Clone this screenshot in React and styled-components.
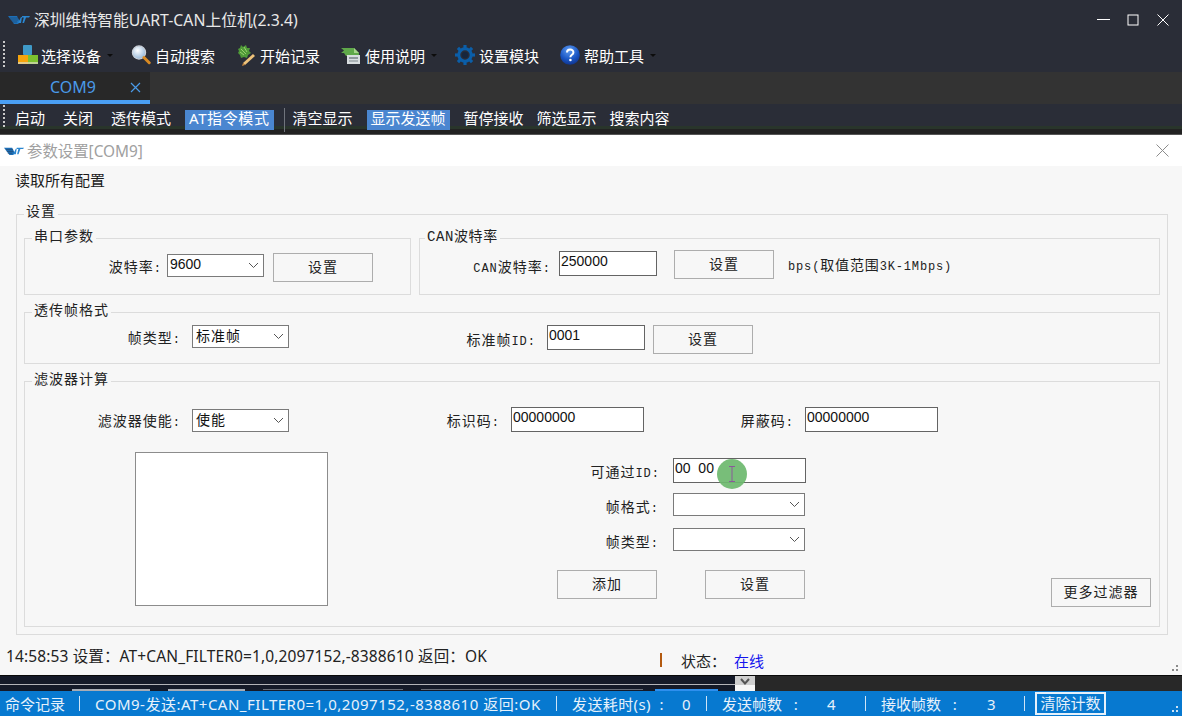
import styled, { createGlobalStyle } from "styled-components";

const GlobalStyle = createGlobalStyle`
  html, body {
    margin: 0;
    padding: 0;
    overflow: hidden;
    background: #2a2d37;
  }
  * {
    box-sizing: border-box;
  }
`;

const uiFont = `"Noto Sans", "Noto Sans CJK SC", sans-serif`;
const formFont = `"Liberation Mono", "Noto Sans CJK SC", monospace`;
const valueFont = `"Liberation Sans", "Noto Sans CJK SC", sans-serif`;

/* drawings */
const Logo = ({ w = 22 }) => (
  <svg width={w} height={w / 2} viewBox="0 0 22 11">
    <path d="M0 2h9l3 6-2 2H6z" fill="#1c6fb8" />
    <path d="M2 4l8 0M3 6l7 0M4 8l5 0" stroke="#2a2d37" strokeWidth="0.7" opacity="0.6" />
    <path d="M10 9l3-6h1l-1 6zM14 2h8l-1 1.4h-3L16 9h-1.6l1.4-5.6H14z" fill="#2a86d0" />
  </svg>
);

const DeviceIcon = () => (
  <svg width="20" height="22" viewBox="0 0 20 22">
    <rect x="5" y="1" width="9" height="10" rx="1" fill="#3f9ac8" />
    <rect x="0" y="11" width="10" height="9" fill="#f5a40c" />
    <rect x="10" y="11" width="10" height="9" fill="#7cc22e" />
    <rect x="0" y="18" width="20" height="2" fill="#d8d8c0" opacity="0.7" />
  </svg>
);

const SearchIcon = () => (
  <svg width="20" height="22" viewBox="0 0 20 22">
    <defs>
      <radialGradient id="lens" cx="40%" cy="35%" r="70%">
        <stop offset="0%" stopColor="#ffffff" />
        <stop offset="100%" stopColor="#8fb4d8" />
      </radialGradient>
    </defs>
    <circle cx="8" cy="8.5" r="6.6" fill="url(#lens)" stroke="#c9ced6" strokeWidth="1.2" />
    <path d="M13 13.5l5.2 5.2" stroke="#d98a22" strokeWidth="3" strokeLinecap="round" />
  </svg>
);

const RecordIcon = () => (
  <svg width="20" height="22" viewBox="0 0 20 22">
    <path d="M2 5l2-1 1-3 2 2 3-2 1 3 3 0-1 3 2 2-3 2-1 3-3-1-3 1-1-3-2-2 1-2z" fill="#4f9a38" />
    <path d="M5 5l5 5M8 3l3 5M4 8l4 3" stroke="#9ad06e" strokeWidth="1" />
    <path d="M7 19l10-9 2 2-10 9z" fill="#eec27a" />
    <path d="M7 19l2 2-3 1z" fill="#c9863a" />
  </svg>
);

const ManualIcon = () => (
  <svg width="20" height="22" viewBox="0 0 20 22">
    <path d="M0 4h13l5 5v3H5L3 9H0l3-2.4z" fill="#5fa84a" />
    <path d="M13 4l5 5h-5z" fill="#a7d68c" />
    <rect x="6" y="11" width="13" height="9" fill="#d8dde0" />
    <rect x="8" y="13" width="9" height="2" fill="#8e979c" />
    <rect x="8" y="16" width="9" height="2" fill="#aab2b6" />
  </svg>
);

const GearIcon = () => (
  <svg width="20" height="22" viewBox="0 0 20 20">
    <circle cx="10" cy="10" r="6.2" fill="none" stroke="#0b5ea8" strokeWidth="3" />
    <circle cx="10" cy="10" r="3.2" fill="#17263c" />
    {[0, 45, 90, 135, 180, 225, 270, 315].map((deg) => (
      <rect key={deg} x="8.4" y="0" width="3.2" height="3.4" fill="#0b5ea8" transform={`rotate(${deg} 10 10)`} />
    ))}
  </svg>
);

const HelpIcon = () => (
  <svg width="20" height="22" viewBox="0 0 20 22">
    <defs>
      <radialGradient id="ball" cx="45%" cy="25%" r="80%">
        <stop offset="0%" stopColor="#5f9cf0" />
        <stop offset="60%" stopColor="#1a56c4" />
        <stop offset="100%" stopColor="#0e2f86" />
      </radialGradient>
    </defs>
    <circle cx="10" cy="11" r="9.8" fill="url(#ball)" />
    <path d="M7 8.6c0-4 6.4-4 6.4-.2 0 2.4-3 2.4-3 4.8" fill="none" stroke="#fff" strokeWidth="2" />
    <circle cx="10.4" cy="16" r="1.3" fill="#fff" />
  </svg>
);

const Chevron = () => (
  <svg width="11" height="7" viewBox="0 0 11 7">
    <path d="M1 1l4.5 4.5L10 1" fill="none" stroke="#555" strokeWidth="1" />
  </svg>
);

/* window chrome */
const Page = styled.div`
  width: 1182px;
  height: 716px;
  display: flex;
  flex-direction: column;
  overflow: hidden;
  background: #2a2d37;
  color: #fff;
  font-family: ${uiFont};
  font-size: 15px;
`;

const TitleBar = styled.header`
  height: 38px;
  flex: none;
  display: flex;
  align-items: center;
  padding: 1px 0 0 8px;
  gap: 4px;
  font-size: 15.8px;
  color: #e8e8e8;
`;

const Title = styled.span`
  flex: 1;
  white-space: nowrap;
`;

const WinButton = styled.button`
  width: 30px;
  height: 30px;
  padding: 0;
  margin: 0;
  background: none;
  border: none;
  display: flex;
  align-items: center;
  justify-content: center;
`;

const WinButtons = styled.div`
  display: flex;
  padding-right: 4px;
`;

const Toolbar = styled.nav`
  height: 34px;
  flex: none;
  display: flex;
  align-items: center;
  padding-left: 3px;
`;

const Grip = styled.i`
  display: block;
  flex: none;
  width: 2px;
  height: ${(p) => p.$h}px;
  background: repeating-linear-gradient(to bottom, #c8c8c8 0 2px, transparent 2px 4px);
`;

const ToolItems = styled.div`
  display: flex;
  gap: 18px;
  margin-left: 13px;
`;

const ToolItem = styled.div`
  display: flex;
  align-items: center;
  gap: 4px;
  padding-right: 3px;
  white-space: nowrap;

  &:first-child svg {
    margin-right: -1px;
  }
`;

const Caret = styled.i`
  display: block;
  margin-left: 2px;
  margin-right: -3px;
  width: 0;
  height: 0;
  border-left: 3px solid transparent;
  border-right: 3px solid transparent;
  border-top: 3px solid #0c0c0c;
`;

const TabStrip = styled.div`
  height: 32px;
  flex: none;
  background: #333333;
  display: flex;
`;

const Tab = styled.div`
  width: 150px;
  display: flex;
  align-items: center;
  padding: 2px 9px 0 50px;
  justify-content: space-between;
  background: #282828;
  border-bottom: 4px solid #4a9ff5;
  color: #4a9ae8;
  font-size: 16px;
`;

const ActionBar = styled.div`
  height: 31px;
  flex: none;
  display: flex;
  align-items: flex-start;
  padding: 1px 0 0 3px;
  border-bottom: 1px solid #555;
  background: linear-gradient(to bottom, #2a2d37 0 22px, #29352b 22px 25px, #222222 25px);
  font-size: 15px;
`;

const ActionItems = styled.div`
  display: flex;
  align-items: center;
  margin: 3px 0 0 6px;
`;

const ActionBtn = styled.span`
  height: 20px;
  line-height: 17px;
  padding: 0 4px;
  margin-right: ${(p) => p.$mr ?? 10}px;
  letter-spacing: ${(p) => p.$ls ?? 0}px;
  white-space: nowrap;
  background: ${(p) => (p.$active ? "#4a86d0" : "transparent")};
`;

const ActionSep = styled.i`
  display: block;
  width: 1px;
  height: 24px;
  margin-right: 4px;
  background: #70747c;
`;

/* dialog */
const Dialog = styled.section`
  height: 540px;
  flex: none;
  display: flex;
  flex-direction: column;
  background: #f7f7f7;
  color: #1a1a1a;
  position: relative;
`;

const DialogHeader = styled.div`
  height: 31px;
  flex: none;
  display: flex;
  align-items: center;
  gap: 3px;
  padding: 0 13px 0 4px;
  background: #fff;
`;

const DialogTitle = styled.span`
  flex: 1;
  color: #a0a0a0;
  font-size: 15.4px;
`;

const ReadAll = styled.div`
  height: 38px;
  flex: none;
  padding: 4px 0 0 15px;
  line-height: 20px;
  font-size: 15px;
`;

const Group = styled.fieldset`
  margin: 0;
  min-width: 0;
  padding: 0;
  border: 1px solid #dcdcdc;
  height: ${(p) => (p.$h ? `${p.$h}px` : "auto")};
  width: ${(p) => (p.$w ? `${p.$w}px` : "auto")};
  font-family: ${formFont};
  font-size: 14px;
  letter-spacing: 1px;
`;

const Legend = styled.legend`
  margin-left: ${(p) => p.$ml ?? 7}px;
  padding: 0 2px;
  line-height: 20px;
  font-size: 14px;
  color: #222;
  position: relative;
  top: ${(p) => p.$top ?? -1}px;
  letter-spacing: ${(p) => p.$ls ?? 1}px;
`;

/* half width latin run inside the form labels */
const Latin = styled.span`
  font-size: 12px;
`;

const OuterGroup = styled(Group)`
  margin: 0 14px 0 16px;
  padding: 4px 7px 7px;
  display: block;
`;

const GroupPair = styled.div`
  display: flex;
  gap: 8px;
  margin-bottom: 7px;
`;

const Stack = styled.div`
  display: flex;
  flex-direction: column;
  gap: 7px;
`;

const Row = styled.div`
  display: flex;
  align-items: flex-start;
  height: ${(p) => p.$h ?? 34}px;
  padding-top: ${(p) => p.$pt ?? 0}px;
`;

const Label = styled.label`
  flex: none;
  width: ${(p) => p.$w}px;
  height: 20px;
  margin-top: ${(p) => p.$mt ?? 5}px;
  padding-right: ${(p) => p.$pr ?? 10}px;
  text-align: right;
  line-height: 20px;
  white-space: nowrap;
  color: #222;
`;

const Field = styled.div`
  flex: none;
  width: ${(p) => p.$w}px;
  height: ${(p) => p.$h ?? 23}px;
  margin-top: ${(p) => p.$mt ?? 0}px;
  background: #fff;
  border: 1px solid #7a7a7a;
  font-family: ${valueFont};
  font-size: 14px;
  letter-spacing: ${(p) => p.$ls ?? 0}px;
  color: #111;
  position: relative;
`;

const SelectBox = styled(Field)`
  display: flex;
  align-items: center;
  justify-content: space-between;
  padding: 0 4px 3px ${(p) => p.$pl ?? 2}px;

  svg {
    margin-top: 2px;
  }
`;

const TextBox = styled.input`
  flex: none;
  display: block;
  width: ${(p) => p.$w}px;
  height: 25px;
  margin: ${(p) => p.$mt ?? 0}px 0 0;
  padding: 0 1px 5px;
  background: #fff;
  border: 1px solid #646464;
  border-radius: 0;
  outline: none;
  font-family: ${valueFont};
  font-size: 14px;
  color: #111;
`;

const Button = styled.button`
  flex: none;
  width: 100px;
  height: 29px;
  margin: ${(p) => p.$mt ?? 0}px 0 0 ${(p) => p.$ml ?? 0}px;
  padding: 0 0 4px;
  background: #f7f7f7;
  border: 1px solid #adadad;
  border-radius: 0;
  font-family: ${formFont};
  font-size: 14px;
  letter-spacing: 1px;
  color: #222;
`;

const Hint = styled.span`
  margin: 6px 0 0 14px;
  line-height: 20px;
  letter-spacing: 0.85px;
  white-space: nowrap;
  color: #222;
`;

const FilterLower = styled.div`
  display: flex;
  align-items: flex-start;
  margin-top: 20px;
  padding-left: 110px;
`;

const ListBox = styled.div`
  flex: none;
  width: 193px;
  height: 154px;
  background: #fff;
  border: 1px solid #8c8c8c;
`;

const FilterForm = styled.div`
  flex: none;
  width: 249px;
  margin-left: 229px;
  padding-top: 6px;
  display: flex;
  flex-direction: column;
`;

const FormRow = styled.div`
  display: flex;
  align-items: flex-start;
  height: ${(p) => p.$h}px;
  margin-top: ${(p) => p.$mt ?? 0}px;
`;

const ButtonRow = styled.div`
  display: flex;
  justify-content: space-between;
  width: 248px;
  margin-top: 19px;
`;

const CursorSlot = styled.div`
  position: relative;
  flex: none;
`;

const ClickMark = styled.div`
  position: absolute;
  left: 44px;
  top: 1px;
  width: 30px;
  height: 30px;
  border-radius: 50%;
  background: rgba(108, 184, 110, 0.92);
  display: flex;
  align-items: center;
  justify-content: center;
`;

const StatusRow = styled.div`
  flex: 1;
  display: flex;
  padding-left: 6px;
  font-size: 15.5px;
  color: #222;
`;

const LogText = styled.div`
  width: 654px;
  margin-top: 10px;
  line-height: 22px;
  letter-spacing: 0.13px;
  white-space: nowrap;
`;

const OnlineBlock = styled.div`
  display: flex;
  align-items: center;
  margin-top: 17px;
  height: 16px;
  font-size: 15px;
`;

const VerticalTick = styled.i`
  display: block;
  width: 2px;
  height: 14px;
  background: #b35a10;
  margin-right: 19px;
`;

const Online = styled.span`
  color: #1414ee;
  margin-left: 8px;
`;

const ResizeGrip = styled.div`
  position: absolute;
  right: 2px;
  bottom: 2px;
  width: 12px;
  height: 12px;
  background-image: radial-gradient(circle at 1px 1px, ${(p) => p.$c} 1px, transparent 1px);
  background-size: 4px 4px;
  clip-path: polygon(100% 0, 100% 100%, 0 100%);
`;

/* strip of the window behind the dialog */
const Behind = styled.div`
  height: 16px;
  flex: none;
  display: flex;
  border-top: 1px solid #0a0a0a;
  background: #282828;
`;

const BehindLeft = styled.div`
  width: 735px;
  display: flex;
  flex-direction: column;
  background: #151a28;
`;

const BehindLine = styled.i`
  display: block;
  height: 1px;
  margin-top: 8px;
  background: #b4b4b8;
`;

const BehindCuts = styled.div`
  margin-top: auto;
  height: 2px;
  display: flex;
  padding-left: 72px;
`;

const Cut = styled.i`
  display: block;
  width: ${(p) => p.$w}px;
  margin-right: ${(p) => p.$mr}px;
  background: ${(p) => p.$bg ?? "transparent"};
  border-top: ${(p) => (p.$outline ? "1px solid #6a6e78" : "none")};
`;

const BehindScroll = styled.div`
  width: 20px;
  background: linear-gradient(to bottom, #cfcfcf 0 9px, #f7f7f7 9px);
  display: flex;
  justify-content: center;
  padding-top: 2px;
`;

const StatusBar = styled.footer`
  flex: 1;
  display: flex;
  align-items: center;
  padding-left: 5px;
  background: #0779d0;
  color: #e6f1fb;
  font-size: 15px;
  white-space: pre;
  position: relative;
`;

const StatusText = styled.span`
  flex: none;
  width: ${(p) => p.$w}px;
  letter-spacing: ${(p) => p.$ls ?? 0}px;
`;

const StatusSep = styled.i`
  display: block;
  flex: none;
  width: 1px;
  height: 15px;
  margin-right: 15px;
  background: #cfe4f6;
`;

const ClearBtn = styled.div`
  flex: none;
  width: 71px;
  height: 23px;
  margin-left: -5px;
  border: 2px solid #e6f1fb;
  text-align: center;
  line-height: 18px;
`;

const App = () => {
  return (
    <Page>
      <GlobalStyle />
      <TitleBar>
        <Logo />
        <Title>深圳维特智能UART-CAN上位机(2.3.4)</Title>
        <WinButtons>
          <WinButton>
            <svg width="13" height="13" viewBox="0 0 13 13">
              <path d="M0 6.5h13" stroke="#fff" />
            </svg>
          </WinButton>
          <WinButton>
            <svg width="12" height="12" viewBox="0 0 12 12">
              <rect x="1" y="1" width="10" height="10" fill="none" stroke="#fff" />
            </svg>
          </WinButton>
          <WinButton>
            <svg width="12" height="12" viewBox="0 0 12 12">
              <path d="M0.5 0.5l11 11M11.5 0.5l-11 11" stroke="#fff" />
            </svg>
          </WinButton>
        </WinButtons>
      </TitleBar>

      <Toolbar>
        <Grip $h={28} />
        <ToolItems>
          <ToolItem>
            <DeviceIcon />
            选择设备
            <Caret />
          </ToolItem>
          <ToolItem>
            <SearchIcon />
            自动搜索
          </ToolItem>
          <ToolItem>
            <RecordIcon />
            开始记录
          </ToolItem>
          <ToolItem>
            <ManualIcon />
            使用说明
            <Caret />
          </ToolItem>
          <ToolItem>
            <GearIcon />
            设置模块
          </ToolItem>
          <ToolItem>
            <HelpIcon />
            帮助工具
            <Caret />
          </ToolItem>
        </ToolItems>
      </Toolbar>

      <TabStrip>
        <Tab>
          COM9
          <svg width="11" height="11" viewBox="0 0 11 11">
            <path d="M1 1l9 9M10 1l-9 9" stroke="#4a9ae8" strokeWidth="1.2" />
          </svg>
        </Tab>
      </TabStrip>

      <ActionBar>
        <Grip $h={22} />
        <ActionItems>
          <ActionBtn>启动</ActionBtn>
          <ActionBtn>关闭</ActionBtn>
          <ActionBtn>透传模式</ActionBtn>
          <ActionBtn $active $ls={0.6}>AT指令模式</ActionBtn>
          <ActionSep />
          <ActionBtn>清空显示</ActionBtn>
          <ActionBtn $active $mr={10}>显示发送帧</ActionBtn>
          <ActionBtn $mr={5}>暂停接收</ActionBtn>
          <ActionBtn $mr={5}>筛选显示</ActionBtn>
          <ActionBtn>搜索内容</ActionBtn>
        </ActionItems>
      </ActionBar>

      <Dialog>
        <DialogHeader>
          <Logo w={20} />
          <DialogTitle>参数设置[COM9]</DialogTitle>
          <svg width="13" height="13" viewBox="0 0 13 13">
            <path d="M0.5 0.5l12 12M12.5 0.5l-12 12" stroke="#8c8c8c" />
          </svg>
        </DialogHeader>
        <ReadAll>读取所有配置</ReadAll>

        <OuterGroup>
          <Legend $ml={0} $top={-2}>设置</Legend>
          <GroupPair>
            <Group $w={387} $h={67}>
              <Legend>串口参数</Legend>
              <Row $pt={5}>
                <Label $w={142} $pr={5}>波特率<Latin>:</Latin></Label>
                <SelectBox $w={97} $mt={1}>
                  9600
                  <Chevron />
                </SelectBox>
                <Button $ml={9}>设置</Button>
              </Row>
            </Group>
            <Group $w={741} $h={67}>
              <Legend $ml={5} $ls={0.6}>CAN波特率</Legend>
              <Row $pt={2}>
                <Label $w={139} $pr={8} $mt={8}><Latin>CAN</Latin>波特率<Latin>:</Latin></Label>
                <TextBox $w={98} $mt={1} readOnly value="250000" />
                <Button $ml={17}>设置</Button>
                <Hint><Latin>bps(</Latin>取值范围<Latin>3K-1Mbps)</Latin></Hint>
              </Row>
            </Group>
          </GroupPair>

          <Stack>
            <Group $h={62}>
              <Legend>透传帧格式</Legend>
              <Row $pt={3}>
                <Label $w={167} $pr={11} $mt={4}>帧类型<Latin>:</Latin></Label>
                <SelectBox $w={97} $pl={3} $ls={1}>
                  标准帧
                  <Chevron />
                </SelectBox>
                <Label $w={258} $pr={11} $mt={6}>标准帧<Latin>ID:</Latin></Label>
                <TextBox $w={98} readOnly value="0001" />
                <Button $ml={8}>设置</Button>
              </Row>
            </Group>

            <Group $h={256}>
              <Legend>滤波器计算</Legend>
              <Row $pt={16} $h={41}>
                <Label $w={167} $pr={11}>滤波器使能<Latin>:</Latin></Label>
                <SelectBox $w={97} $mt={2} $pl={3} $ls={1}>
                  使能
                  <Chevron />
                </SelectBox>
                <Label $w={222} $pr={11}>标识码<Latin>:</Latin></Label>
                <TextBox $w={133} readOnly value="00000000" />
                <Label $w={161} $pr={11}>屏蔽码<Latin>:</Latin></Label>
                <TextBox $w={133} readOnly value="00000000" />
              </Row>
              <FilterLower>
                <ListBox />
                <FilterForm>
                  <FormRow $h={25}>
                    <Label $w={116} $pr={13}>可通过<Latin>ID:</Latin></Label>
                    <CursorSlot>
                      <TextBox $w={133} readOnly value="00  00" />
                      <ClickMark>
                        <svg width="8" height="16" viewBox="0 0 8 16">
                          <path d="M1 0.5h6M1 15.5h6M4 0.5v15" stroke="#8a5a9a" fill="none" />
                        </svg>
                      </ClickMark>
                    </CursorSlot>
                  </FormRow>
                  <FormRow $mt={10} $h={23}>
                    <Label $w={116} $pr={14} $mt={5}>帧格式<Latin>:</Latin></Label>
                    <SelectBox $w={132}>
                      <span />
                      <Chevron />
                    </SelectBox>
                  </FormRow>
                  <FormRow $mt={12} $h={23}>
                    <Label $w={116} $pr={14} $mt={5}>帧类型<Latin>:</Latin></Label>
                    <SelectBox $w={132}>
                      <span />
                      <Chevron />
                    </SelectBox>
                  </FormRow>
                  <ButtonRow>
                    <Button>添加</Button>
                    <Button>设置</Button>
                  </ButtonRow>
                </FilterForm>
                <Button $ml={245} $mt={126}>更多过滤器</Button>
              </FilterLower>
            </Group>
          </Stack>
        </OuterGroup>

        <StatusRow>
          <LogText>14:58:53 设置：AT+CAN_FILTER0=1,0,2097152,-8388610 返回：OK</LogText>
          <OnlineBlock>
            <VerticalTick />
            状态：
            <Online>在线</Online>
          </OnlineBlock>
        </StatusRow>
        <ResizeGrip $c="#8a8a8a" />
      </Dialog>

      <Behind>
        <BehindLeft>
          <BehindLine />
          <BehindCuts>
            <Cut $w={78} $mr={18} $bg="#a8acb4" />
            <Cut $w={77} $mr={18} $bg="#a8acb4" />
            <Cut $w={140} $mr={18} $outline />
            <Cut $w={222} $mr={12} $outline />
            <Cut $w={63} $mr={0} $bg="#2e8fee" />
          </BehindCuts>
        </BehindLeft>
        <BehindScroll>
          <svg width="10" height="7" viewBox="0 0 10 7">
            <path d="M1 1l4 4.5L9 1" fill="none" stroke="#555" strokeWidth="2" />
          </svg>
        </BehindScroll>
      </Behind>

      <StatusBar>
        <StatusText $w={74}>命令记录</StatusText>
        <StatusSep />
        <StatusText $w={461} $ls={0.5}>COM9-发送:AT+CAN_FILTER0=1,0,2097152,-8388610 返回:OK</StatusText>
        <StatusSep />
        <StatusText $w={110} $ls={0.4}>发送耗时(s)  :</StatusText>
        <StatusText $w={24}>0</StatusText>
        <StatusSep />
        <StatusText $w={105}>发送帧数   :</StatusText>
        <StatusText $w={38}>4</StatusText>
        <StatusSep />
        <StatusText $w={106}>接收帧数   :</StatusText>
        <StatusText $w={37}>3</StatusText>
        <StatusSep />
        <ClearBtn>清除计数</ClearBtn>
        <ResizeGrip $c="#cfe4f6" />
      </StatusBar>
    </Page>
  );
};

export default App;
